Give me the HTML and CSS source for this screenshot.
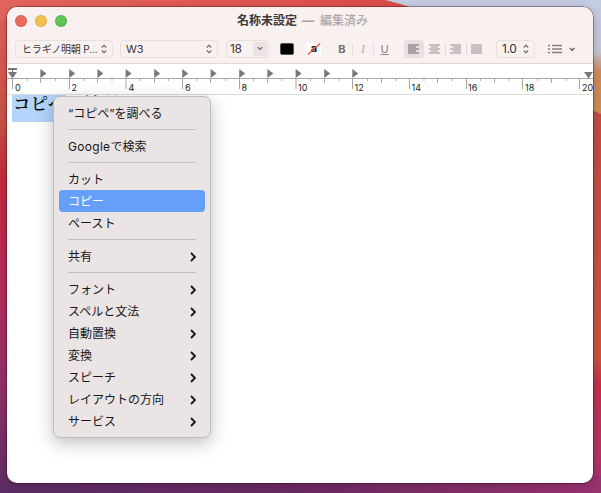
FILE: index.html
```html
<!DOCTYPE html>
<html lang="ja">
<head>
<meta charset="utf-8">
<title>名称未設定</title>
<link rel="stylesheet" href="styles.css">
</head>
<body>
<svg class="wallpaper" width="601" height="493" viewBox="0 0 601 493">
  <defs>
    <linearGradient id="left" x1="0" y1="0" x2="0" y2="1">
      <stop offset="0" stop-color="#e3625c"/><stop offset=".13" stop-color="#d8594f"/><stop offset=".25" stop-color="#c65246"/>
      <stop offset=".36" stop-color="#c32b3a"/><stop offset=".58" stop-color="#b52c5c"/>
      <stop offset=".8" stop-color="#8f3167"/><stop offset="1" stop-color="#5b2d66"/>
    </linearGradient>
    <linearGradient id="sky" x1="0" y1="0" x2="0" y2="1">
      <stop offset="0" stop-color="#c3cce3"/><stop offset=".45" stop-color="#c2c5d4"/><stop offset=".62" stop-color="#c98a5c"/><stop offset="1" stop-color="#cb8e55"/>
    </linearGradient>
    <linearGradient id="right" x1="0" y1="0" x2="0" y2="1">
      <stop offset="0" stop-color="#bd4d43"/><stop offset=".65" stop-color="#c9543f"/><stop offset=".72" stop-color="#c0304a"/>
      <stop offset=".9" stop-color="#b03565"/><stop offset="1" stop-color="#9a3270"/>
    </linearGradient>
    <linearGradient id="top"><stop offset="0" stop-color="#e3665e"/><stop offset="1" stop-color="#dc4b46"/></linearGradient>
    <linearGradient id="bottom"><stop offset="0" stop-color="#5b2d66"/><stop offset=".5" stop-color="#6a2a60"/><stop offset="1" stop-color="#9a3270"/></linearGradient>
  </defs>
  <rect width="601" height="493" fill="url(#left)"/>
  <rect width="420" height="20" fill="url(#top)"/>
  <path d="M385 0H601V115H580V20H440Q412 6 385 0Z" fill="url(#sky)"/>
  <path d="M580 105L601 114V493H580Z" fill="url(#right)"/>
  <rect x="10" y="476" width="591" height="17" fill="url(#bottom)"/>
</svg>

<main class="window">
  <header class="chrome">
    <div class="titlebar">
      <div class="lights"><i class="close"></i><i class="minimize"></i><i class="expand"></i></div>
      <h1><span class="name">名称未設定</span><span class="dash">—</span><span class="state">編集済み</span></h1>
    </div>
    <div class="toolbar">
      <div class="field family"><span>ヒラギノ明朝 P...</span><svg width="6" height="10" viewBox="0 0 6 10"><path d="M.8 3.5L3 1.2 5.2 3.5M.8 6.5L3 8.8 5.2 6.5"/></svg></div>
      <div class="field weight"><span>W3</span><svg width="6" height="10" viewBox="0 0 6 10"><path d="M.8 3.5L3 1.2 5.2 3.5M.8 6.5L3 8.8 5.2 6.5"/></svg></div>
      <div class="field size"><span>18</span><b><svg width="6" height="5" viewBox="0 0 6 5"><path d="M.8 1.2L3 3.5 5.2 1.2"/></svg></b></div>
      <div class="swatch"></div>
      <div class="highlight">a<svg width="14" height="12" viewBox="0 0 14 12"><path d="M1 11.5L13 .5"/></svg></div>
      <div class="styles"><b>B</b><em>I</em><u>U</u></div>
      <svg class="align" width="84" height="18" viewBox="0 0 84 18">
        <rect width="20" height="18" rx="4" fill="#e7dfe0"/>
        <path d="M4 4h11v2h-3v2h3v2h-3v2h3v2H4z" fill="#a9a2a4"/>
        <path d="M25 4h11v2h-2v2h2v2h-2v2h2v2H25v-2h2v-2h-2V8h2V6h-2zM46 4h11v10H46v-2h3v-2h-3V8h3V6h-3zM67 4h11v10H67z" fill="#c8c0c2"/>
        <path d="M41.5 3v12M62.5 3v12" stroke="#e4dbdd"/>
      </svg>
      <div class="field spacing"><span>1.0</span><svg width="6" height="10" viewBox="0 0 6 10"><path d="M.8 3.5L3 1.2 5.2 3.5M.8 6.5L3 8.8 5.2 6.5"/></svg></div>
      <svg class="list" width="28" height="10" viewBox="0 0 28 10"><path d="M0 1.5h2M0 5h2M0 8.5h2M4 1.5h10M4 5h10M4 8.5h10" stroke="#888183" stroke-width="1.5"/><path d="M22 4l2.2 2.3L26.4 4" fill="none" stroke="#625c5e" stroke-width="1.3"/></svg>
    </div>
  </header>

  <svg class="ruler" width="586" height="31" viewBox="7 64 586 31">
    <defs><path id="tab" d="M0 69l6 4.5-6 4.5z"/></defs>
    <path d="M7 78.5H593" stroke="#a8a8a8"/>
    <path d="M7 94.5H593" stroke="#dcdcdc"/>
    <path d="M12.5 79v10M69.5 79v10M126 79v10M182.5 79v10M239.5 79v10M296 79v10M352.5 79v10M409.5 79v10M466.5 79v10M522.5 79v10M579.5 79v10" stroke="#a5a5a5"/>
    <path d="M40.5 79v4M97.5 79v4M154.5 79v4M210.5 79v4M267.5 79v4M324.5 79v4M381.5 79v4M437.5 79v4M494.5 79v4M551.5 79v4" stroke="#a5a5a5"/>
    <path d="M26.5 80h1M55 80h1M83 80h1M111.5 80h1M140 80h1M168 80h1M196.5 80h1M225 80h1M253 80h1M281.5 80h1M310 80h1M338.5 80h1M367 80h1M395 80h1M423.5 80h1M452 80h1M480 80h1M508.5 80h1M537 80h1M565.5 80h1" stroke="#b0b0b0" stroke-width="2"/>
    <g fill="#777">
      <use href="#tab" x="40.4"/><use href="#tab" x="69.2"/><use href="#tab" x="97.4"/><use href="#tab" x="125.6"/><use href="#tab" x="154.2"/><use href="#tab" x="182.2"/><use href="#tab" x="210.6"/><use href="#tab" x="239.2"/><use href="#tab" x="267.4"/><use href="#tab" x="295.6"/><use href="#tab" x="324.2"/><use href="#tab" x="352.3"/>
      <path d="M8 68h9v2H8zM8 72h9l-4.5 6.5zM12 69h1v4h-1zM584 72h9l-4.5 6.5z"/>
    </g>
    <g class="numbers">
      <text x="15" y="91">0</text><text x="71.5" y="91">2</text><text x="128.5" y="91">4</text><text x="185" y="91">6</text><text x="241.5" y="91">8</text><text x="298" y="91">10</text><text x="354.5" y="91">12</text><text x="411.5" y="91">14</text><text x="468" y="91">16</text><text x="525" y="91">18</text><text x="582" y="91">20</text>
    </g>
  </svg>

  <section class="page"><p><mark>コピペ</mark>の練習</p></section>
</main>

<nav class="menu">
  <div>“コピペ”を調べる</div>
  <hr>
  <div><span class="latin">Google</span>で検索</div>
  <hr>
  <div>カット</div>
  <div class="active">コピー</div>
  <div>ペースト</div>
  <hr>
  <div class="sub">共有<svg width="6" height="10" viewBox="0 0 6 10"><path d="M1 1l4 4-4 4"/></svg></div>
  <hr>
  <div class="sub">フォント<svg width="6" height="10" viewBox="0 0 6 10"><path d="M1 1l4 4-4 4"/></svg></div>
  <div class="sub">スペルと文法<svg width="6" height="10" viewBox="0 0 6 10"><path d="M1 1l4 4-4 4"/></svg></div>
  <div class="sub">自動置換<svg width="6" height="10" viewBox="0 0 6 10"><path d="M1 1l4 4-4 4"/></svg></div>
  <div class="sub">変換<svg width="6" height="10" viewBox="0 0 6 10"><path d="M1 1l4 4-4 4"/></svg></div>
  <div class="sub">スピーチ<svg width="6" height="10" viewBox="0 0 6 10"><path d="M1 1l4 4-4 4"/></svg></div>
  <div class="sub">レイアウトの方向<svg width="6" height="10" viewBox="0 0 6 10"><path d="M1 1l4 4-4 4"/></svg></div>
  <div class="sub">サービス<svg width="6" height="10" viewBox="0 0 6 10"><path d="M1 1l4 4-4 4"/></svg></div>
</nav>
</body>
</html>
```
FILE: styles.css
```css
* { box-sizing: border-box; }
body { margin: 0; width: 601px; height: 493px; padding: 7px; overflow: hidden; font-family: Inter, "Noto Sans CJK JP", sans-serif; }
.wallpaper { position: absolute; left: 0; top: 0; z-index: -1; }
.window { width: 586px; height: 476px; border-radius: 10px; background: #fff; overflow: hidden; box-shadow: 0 0 0 .5px rgba(50, 0, 20, .65), 0 2px 8px rgba(40, 0, 30, .25); display: flex; flex-direction: column; }
.chrome { height: 57px; flex: none; background: #f9f0f0; border-bottom: 1px solid #e1d9d9; }
.titlebar { height: 27px; display: flex; align-items: center; padding-left: 8px; }
.lights { display: flex; gap: 8px; width: 222px; }
.lights i { width: 12px; height: 12px; border-radius: 50%; border: .5px solid rgba(0, 0, 0, .1); }
.close { background: #ec6a5e; }
.minimize { background: #f5bf4f; }
.expand { background: #61c554; }
h1 { margin: 0; font-size: 12px; line-height: 20px; display: flex; white-space: nowrap; }
.name { color: #3e393a; width: 65px; }
.dash { color: #a79fa1; width: 18px; font-weight: 700; }
.state { color: #b0a7a9; font-weight: 500; }
.toolbar { height: 29px; display: flex; align-items: center; padding-left: 8px; }
.field { height: 18px; border: 1px solid #e8dfdf; border-radius: 4px; display: flex; align-items: center; justify-content: space-between; padding: 0 5px 0 6px; font-size: 11px; line-height: 16px; color: #3b3637; white-space: nowrap; }
.field svg { fill: none; stroke: #666062; stroke-width: 1.1; flex: none; }
.family { width: 98px; font-size: 10px; letter-spacing: -.15px; }
.weight { width: 98px; margin-left: 7px; padding-left: 5px; }
.size { width: 43px; margin-left: 8px; padding: 0 1px 0 3px; font-size: 12px; letter-spacing: -.4px; }
.size b { width: 14px; height: 14px; border-radius: 3px; background: #ebe2e3; display: flex; align-items: center; justify-content: center; }
.swatch { width: 14px; height: 12px; margin-left: 11px; background: #000; border-radius: 2px; border: .5px solid #555; }
.highlight { position: relative; width: 14px; height: 12px; margin-left: 13px; background: #fff; border-radius: 2px; text-align: center; font-size: 11px; font-weight: 700; line-height: 11px; color: #111; }
.highlight svg { position: absolute; left: 0; top: 0; stroke: #e0483e; stroke-width: 1.2; }
.styles { width: 64px; margin-left: 11px; display: flex; font-size: 11px; line-height: 12px; color: #898183; }
.styles > * { width: 21px; text-align: center; }
.styles b { color: #777072; border-right: 1px solid #e6dddf; }
.styles em { font-family: "Liberation Serif", serif; font-size: 12px; color: #b3aaac; border-right: 1px solid #e6dddf; }
.align { margin-left: 8px; }
.spacing { width: 39px; margin-left: 8px; padding-left: 5px; font-size: 12px; letter-spacing: -.4px; }
.list { margin-left: 13px; }
.ruler { flex: none; display: block; }
.numbers { font-size: 9px; fill: #222; }
.page { flex: 1; overflow: hidden; }
.page p { margin: 0 0 0 5px; height: 27px; font: 600 17.5px/15px "Noto Serif CJK JP", "Noto Sans CJK JP", serif; color: #111; white-space: nowrap; display: flex; }
.page mark { background: #b4d5fb; color: #111; height: 27px; width: 54px; padding-left: 1px; }
.menu { position: absolute; left: 53px; top: 96px; width: 158px; height: 342px; padding: 5px; border: 1px solid #bfbabb; border-radius: 7px; background: #eae4e4; box-shadow: 0 5px 17px rgba(0, 0, 0, .25); font-size: 12px; line-height: 22px; color: #191718; white-space: nowrap; }
.menu div { height: 22px; padding: 1px 9px 0; border-radius: 4px; }
.menu hr { height: 1px; margin: 5px 9px; border: 0; background: #c6c0c0; }
.menu .active { background: #669ffa; color: #fff; }
.menu .sub { display: flex; align-items: center; justify-content: space-between; line-height: 21px; }
.sub svg { fill: none; stroke: #151314; stroke-width: 1.8; }
.latin { letter-spacing: .3px; }
```
